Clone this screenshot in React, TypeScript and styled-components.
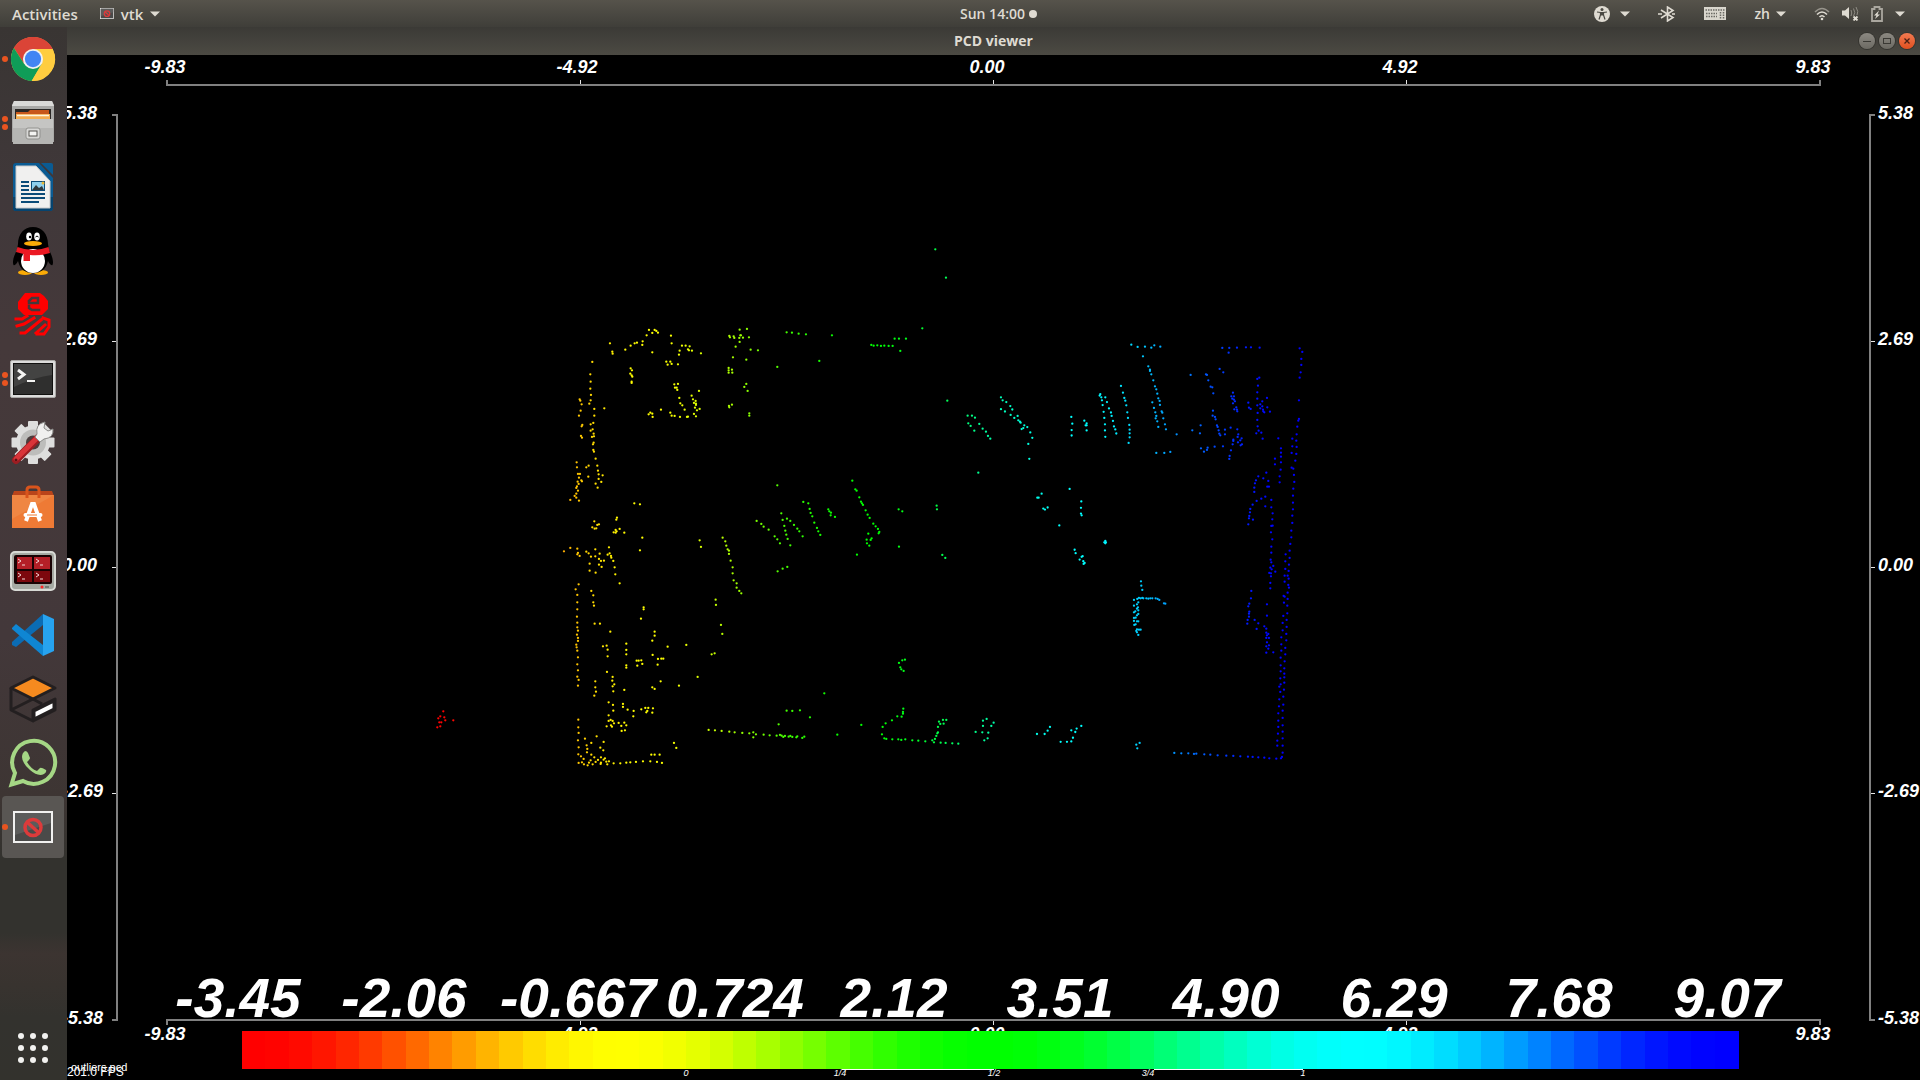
import React from "react";
import styled, { createGlobalStyle } from "styled-components";

const GlobalStyle = createGlobalStyle`
  * { box-sizing: border-box; }
  html, body { margin: 0; background: #000; }
  body { font-family: "Open Sans", "Noto Sans", sans-serif; color: #dfdbd2; overflow: hidden; }
  button { border: 0; padding: 0; margin: 0; background: none; color: inherit; font: inherit; }
`;

const Desktop = styled.div`
  min-height: 100vh;
  display: flex;
  flex-direction: column;
`;

const TopBar = styled.header`
  height: 27px;
  display: grid;
  grid-template-columns: 1fr auto 1fr;
  align-items: center;
  padding: 0 15px 0 12px;
  background: linear-gradient(#56534b, #3f3e39);
  font-size: 14px;
  line-height: 20px;
  font-weight: 600;
`;

const BarGroup = styled.div<{ $gap: number; $end?: boolean }>`
  display: flex;
  align-items: center;
  gap: ${(p) => p.$gap}px;
  justify-content: ${(p) => (p.$end ? "flex-end" : "flex-start")};
`;

const BarButton = styled.button<{ $gap?: number; $large?: boolean }>`
  display: flex;
  align-items: center;
  gap: ${(p) => p.$gap ?? 0}px;
  font-size: ${(p) => (p.$large ? 15 : 14)}px;
  svg { display: block; }
`;

const Clock = styled.button`
  display: flex;
  align-items: center;
  gap: 4px;
  margin-left: 80px;
`;

const ClockDot = styled.span`
  width: 8px;
  height: 8px;
  border-radius: 50%;
  background: #dfdbd2;
`;

const Workspace = styled.div`
  flex: 1;
  display: grid;
  grid-template-columns: 67px 1fr;
`;

const Dock = styled.nav`
  display: flex;
  flex-direction: column;
  background: linear-gradient(
    #393533 0, #40383a 16%, #45393a 30%, #43383a 58%, #3d3533 73%, #33322e 79%,
    #33322e 86%, #3c3431 88%, #38332f 91%, #33322e 94%, #33322d 100%
  );
`;

const DockItem = styled.button<{ $active?: boolean }>`
  position: relative;
  width: 62px;
  height: 62px;
  margin: 1px 0 1px 2px;
  border-radius: 4px;
  display: flex;
  align-items: center;
  justify-content: center;
  background: ${(p) => (p.$active ? "#595653" : "none")};
  svg { display: block; overflow: visible; }
`;

const AppsButton = styled(DockItem)`
  margin-top: auto;
`;

const Running = styled.span`
  position: absolute;
  left: 0;
  top: 0;
  height: 100%;
  display: flex;
  flex-direction: column;
  justify-content: center;
  gap: 2px;
`;

const RunningDot = styled.i`
  width: 6px;
  height: 6px;
  border-radius: 50%;
  background: #e95420;
`;

const Window = styled.main`
  min-width: 0;
  overflow: hidden;
  background: #000;
`;

const TitleBar = styled.div`
  height: 28px;
  display: grid;
  grid-template-columns: 1fr auto 1fr;
  align-items: center;
  padding: 0 5px;
  background: linear-gradient(#3b3a36, #4c4a43);
`;

const Title = styled.h1`
  grid-column: 2;
  margin: 0;
  font-size: 14px;
  line-height: 20px;
  font-weight: 700;
`;

const WindowButtons = styled.div`
  display: flex;
  justify-content: flex-end;
  gap: 4px;
`;

const WindowButton = styled.button<{ $close?: boolean }>`
  width: 16px;
  height: 16px;
  border-radius: 50%;
  background: ${(p) => (p.$close ? "linear-gradient(#f27a51, #e2501f)" : "linear-gradient(#8c8982, #6c6a63)")};
  box-shadow: 0 0 0 1px #35342f;
  svg { display: block; }
`;

const Scene = styled.svg`
  display: block;
  width: 100%;
  height: auto;
`;

const AxisText = styled.text`
  font: italic 700 18px "Liberation Sans", Arial, sans-serif;
  fill: #fff;
`;

const ScaleText = styled.text`
  font: italic 700 55px "Liberation Sans", Arial, sans-serif;
  fill: #fff;
  text-anchor: middle;
`;

const LegendText = styled.text`
  font: italic 400 9px "Liberation Sans", Arial, sans-serif;
  fill: #fff;
  text-anchor: middle;
`;

const OverlayText = styled.text<{ $size: number }>`
  font: 400 ${(p) => p.$size}px "Liberation Sans", Arial, sans-serif;
  fill: #fff;
`;

/* ---------- colour table: hue 0..240 through an S-curve ramp ---------- */

const BANDS = 64;

function rainbow(t: number): string {
  const h = Math.max(0, Math.min(1, t)) * 4;
  const up = (v: number) => Math.round(127.5 * (1 + Math.cos((1 - Math.max(0, Math.min(1, v))) * Math.PI)));
  return `rgb(${up(2 - h)},${up(h < 2 ? h : 4 - h)},${up(h - 2)})`;
}

/* ---------- scanned points, grouped in tiles ---------- */

type Tile = { x: number; y: number; sx: number; sy: number; pts: string };

const TILES: Tile[] = [
  { x: 0, y: 0, sx: 1, sy: 1, pts: "443,711 440,716 444,717 439,722 441,722 437,727 440,726 445,720 453,720 438,718 935,249" },
  {
    x: 540, y: 310, sx: 3, sy: 3,
    pts: "209,99 216,124 217,130 255,118 271,106 283,99 290,97 307,93 306,104 319,75 326,59 336,68 343,59 348,62 353,67 336,126 392,76 394,99 425,106 436,106 448,108 418,121 443,117 446,120 455,121 416,133 482,129 156,155 378,154 390,154 382,163 394,161 413,162 271,174 275,180 270,190 274,195 276,199 274,214 274,218 150,192 151,214 150,235 152,254 151,270 147,280 162,296 192,294 162,316 118,267 120,271 124,282 121,301 116,316 159,338 151,342 126,344 124,348 157,357 151,361 160,370 122,377 125,382 155,380 161,378 160,397 158,402 159,419 161,424 166,445 171,466 145,466 138,471 173,481 175,492 187,495 175,506 183,515 166,520 172,532 144,499 109,456 110,471 113,491 119,491 116,502 123,510 125,513 112,514 115,521 110,528 108,533 113,541 108,550 103,557 108,562 90,569 116,571 402,222 413,221 404,232 409,232 411,239 476,242 417,263 420,279 426,285 433,298 454,256 458,267 466,272 461,278 467,280 467,284 464,292 470,300 478,296 461,311 467,318 362,298 390,307 394,316 403,317 419,320 440,320 443,319 325,312 330,307 336,310 337,320 282,579 299,582 230,622 228,628 238,656 226,659 220,666 229,663 226,667 252,667 306,682 299,720 162,633 176,642 171,644 156,651 163,655 168,654 478,690 482,710 547,682 555,693 558,706 562,717 566,721 566,731 571,751 577,771 598,58 567,77 569,81 580,78 582,83 600,75 597,83 598,95 586,109 578,141 565,173 575,178 565,180 565,187 576,187 566,287 567,291 575,283 71,723 90,713 111,715 113,728 111,732 118,737 138,724 145,729 152,739 165,717 165,738 178,730 176,746 182,752 191,751 148,760 176,763 184,770 206,711 208,729 202,733 212,737 213,742 219,752 223,771",
  },
  {
    x: 540, y: 560, sx: 3, sy: 3,
    pts: "148,31 166,37 225,42 238,69 115,72 106,87 111,104 111,126 111,147 110,169 111,187 111,201 113,211 110,223 113,233 113,242 108,253 109,261 111,271 113,291 111,312 113,330 111,349 115,359 113,376 153,92 159,105 159,126 161,136 163,190 179,190 210,214 188,258 199,256 202,268 202,288 200,335 217,350 216,361 222,372 217,378 219,393 252,389 165,363 165,381 167,394 162,406 205,426 218,434 219,451 205,465 248,431 248,440 262,448 280,452 279,468 303,447 315,443 324,443 338,444 321,452 318,456 336,457 205,482 211,479 217,482 221,489 235,488 252,487 199,498 212,495 215,499 243,497 258,495 244,512 254,510 310,141 310,147 302,175 343,214 343,226 336,241 258,250 258,269 258,282 258,315 258,322 337,284 353,296 363,295 369,295 352,313 289,301 295,301 303,300 291,316 306,311 382,259 438,254 472,350 416,376 361,363 336,381 343,386 526,118 527,134 542,194 546,221 514,282 523,279 577,39 580,60 589,69 589,82 597,92 401,548 408,563 505,509 524,510 544,512 567,514 583,516 114,478 114,501 115,518 113,540 115,561 114,582 169,528 134,535 190,545 153,548 139,555 141,566 180,562 189,570 140,576 153,583 122,588 162,591 182,591 130,596 151,600 173,599 190,598 194,594 115,608 125,606 131,612 142,615 146,607 157,612 166,605 182,607 181,611 198,604 206,603 201,612 220,609 240,609 258,607 270,606 287,605 308,603 330,603 350,605 365,608 333,583 343,583 358,583",
  },
  {
    x: 740, y: 310, sx: 3, sy: 3,
    pts: "20,56 2,75 8,82 26,81 31,118 53,120 18,148 18,221 12,230 22,242 27,309 27,316 139,66 155,67 175,70 197,72 275,75 111,170 237,152 393,104 400,106 411,105 422,107 432,106 445,107 457,107 463,85 476,85 497,85 480,122 546,54 621,271 682,316 695,316 704,322 717,341 684,339 691,347 702,361 727,355 737,364 743,377 750,385 714,487 589,586 590,597 475,597 486,603 476,709 606,734 615,743 336,511 345,537 349,541 357,561 362,574 365,579 368,584 376,600 382,613 388,623 399,640 406,648 413,656 417,665 415,669 384,670 394,684 391,689 379,688 380,699 387,706 350,733 111,525 49,632 63,641 70,649 85,658 103,678 111,687 119,699 123,609 127,629 132,647 135,661 138,673 142,686 150,705 140,625 150,632 161,644 171,655 177,663 187,678 189,575 204,579 208,596 211,608 216,618 222,637 230,653 234,663 240,674 264,597 267,603 272,607 271,615 284,620 112,783 127,775 141,770 3,849 494,1048 486,1050 476,1058 480,1071 483,1077 490,1082 252,1149 139,1201 156,1202 179,1200 209,1221 115,1242 6,1268 27,1269 39,1266 47,1272 39,1281 70,1273 88,1275 109,1276 119,1274 124,1276 129,1280 134,1277 145,1279 150,1277 156,1280 168,1281 171,1278 186,1283 192,1279 291,1273 363,1244 489,1195 488,1205 488,1210 484,1219 471,1218 455,1230 436,1239 427,1250 425,1272 432,1284 438,1286 456,1287 474,1287 483,1289 495,1287 516,1290 534,1291 555,1293 576,1290 581,1296 601,1297 616,1298 636,1299 654,1300 584,1286 588,1277 591,1269 593,1266 593,1250 596,1234 600,1241 610,1240 608,1229 618,1229 739,1226 728,1231 760,1237 728,1247 753,1247 706,1265 726,1266 744,1267 742,1284 732,1290",
  },
  {
    x: 940, y: 230, sx: 3, sy: 2.958,
    pts: "17,140 182,494 187,503 198,508 210,520 182,529 194,536 216,530 211,546 222,555 232,549 234,562 239,566 241,569 252,577 249,585 244,588 261,582 270,598 276,614 264,632 267,676 393,552 396,572 394,591 394,607 432,563 439,571 436,577 439,577 439,592 480,485 478,489 483,494 495,494 485,503 500,508 487,517 506,527 490,537 512,539 514,549 492,555 518,564 494,574 521,580 494,592 525,589 528,601 495,611 388,765 304,779 291,791 295,791 309,823 314,826 322,820 423,802 422,821 422,838 424,843 357,873 495,919 492,923 497,923 495,926 403,945 406,955 427,964 424,966 418,974 429,979 433,984 430,987 329,1469 322,1480 313,1490 290,1490 423,1466 409,1474 393,1479 405,1484 398,1501 393,1512 380,1513 361,1513",
  },
  {
    x: 1120, y: 330, sx: 3, sy: 3,
    pts: "33,43 52,50 74,49 93,52 102,45 120,49 68,78 84,108 89,118 89,122 93,132 99,150 104,168 108,177 111,190 114,204 118,212 119,224 96,216 101,233 105,246 108,257 106,264 111,273 124,243 126,247 129,264 114,290 134,282 137,297 2,167 8,187 12,203 15,211 18,225 21,246 23,263 27,284 28,298 28,309 28,321 25,338 108,368 132,368 150,365 169,312 211,134 216,300 241,285 239,309 242,354 251,364 260,359 262,352 283,349 308,348 306,53 327,53 325,67 350,52 377,51 392,51 418,52 298,116 309,126 257,132 260,134 264,150 271,169 276,171 279,189 278,241 277,256 284,260 286,267 290,285 292,290 295,300 297,310 300,315 314,298 314,312 331,292 351,297 338,187 333,198 341,198 336,205 341,208 344,213 338,219 348,231 342,237 350,238 351,243 354,312 352,320 339,328 339,332 360,330 353,336 364,324 337,342 365,342 361,345 332,360 328,377 327,386 384,217 386,232 391,236 417,142 411,146 413,166 411,186 411,205 411,225 412,248 411,269 412,288 415,301 408,309 423,307 427,325 440,203 426,213 420,222 426,228 420,234 428,238 429,243 441,231 449,244 432,246 474,324 538,54 546,65 543,86 543,104 541,126 538,142 536,210 536,266 534,271 531,289 529,312 528,331 529,350 528,371 525,391 519,415 514,412 521,434 522,455 519,475 518,496 518,517 518,537 516,556 516,578 513,601 513,621 510,641 508,661 508,683 506,703 505,722 502,736 505,745 504,764 506,772 502,787 502,806 501,826 501,849 499,869 499,890 498,911 498,930 495,953 495,972 493,993 492,1014 492,1030 492,1041 492,1057 491,1078 489,1099 489,1123 487,1141 487,1163 487,1185 487,1204 487,1224 487,1246 487,1267 485,1280 482,1284 468,1285 447,1284 432,1282 414,1281 397,1280 383,1279 360,1278 339,1277 318,1276 292,1275 270,1273 252,1272 228,1270 221,1271 204,1269 183,1269 162,1268 516,325 516,348 514,368 482,354 482,367 482,379 482,396 481,418 478,438 478,456 464,385 464,402 438,427 429,444 444,452 441,469 446,469 414,438 407,450 404,459 402,472 402,485 435,499 423,505 409,512 397,523 390,536 389,546 387,557 386,564 398,568 384,582 453,509 435,528 453,531 457,549 456,567 453,587 457,586 452,606 456,627 453,649 453,667 451,688 453,696 459,707 450,712 454,717 447,728 452,729 465,724 452,738 450,758 450,774 496,672 495,693 495,716 493,736 493,754 490,797 493,799 491,817 489,857 487,878 487,900 483,921 483,942 483,961 481,982 481,1005 481,1023 480,1044 481,1062 477,1069 480,1085 477,1107 476,1128 474,1149 474,1171 474,1190 473,1210 471,1231 471,1246 393,782 392,804 387,820 384,828 387,844 386,850 386,859 382,869 381,880 403,869 414,879 409,896 432,888 440,822 440,856 438,895 438,907 444,911 440,915 438,923 446,923 440,936 446,945 438,948 444,955 438,967 459,966 62,753 63,766 66,779 41,809 51,806 56,803 61,804 66,803 69,804 78,804 84,805 90,804 96,804 106,804 112,806 117,809 131,819 135,820 54,816 50,822 41,826 53,831 50,835 54,840 45,843 41,846 54,851 50,855 46,862 41,863 41,872 50,873 54,873 46,882 42,884 50,897 56,898 61,898 48,902 50,906 54,914 58,1238 48,1243 51,1254",
  },
];

const POINTS = TILES.flatMap((t) =>
  t.pts.split(" ").map((p) => {
    const [x, y] = p.split(",").map(Number);
    return { x: t.x + x / t.sx, y: t.y + y / t.sy };
  })
);

const CLOUD_MIN = 430;
const CLOUD_MAX = 1292;

const H_TICKS = [
  { x: 167, label: "-9.83", at: 165 },
  { x: 580, label: "-4.92", at: 577 },
  { x: 993, label: "0.00", at: 987 },
  { x: 1406, label: "4.92", at: 1400 },
  { x: 1820, label: "9.83", at: 1813 },
];
const V_TICKS = [
  { y: 115, label: "5.38" },
  { y: 341, label: "2.69" },
  { y: 567, label: "0.00" },
  { y: 793, label: "-2.69" },
  { y: 1020, label: "-5.38" },
];
const SCALE = [
  { x: 238, label: "-3.45" },
  { x: 404, label: "-2.06" },
  { x: 578, label: "-0.667" },
  { x: 735, label: "0.724" },
  { x: 894, label: "2.12" },
  { x: 1060, label: "3.51" },
  { x: 1226, label: "4.90" },
  { x: 1394, label: "6.29" },
  { x: 1559, label: "7.68" },
  { x: 1727, label: "9.07" },
];
const LEGEND = [
  { x: 686, label: "0" },
  { x: 840, label: "1/4" },
  { x: 994, label: "1/2" },
  { x: 1148, label: "3/4" },
  { x: 1303, label: "1" },
];

const BAR = { x: 242, y: 1031, w: 1496, h: 38 };

function PointCloud() {
  return (
    <Scene viewBox="67 55 1853 1025" role="img" aria-label="Point cloud">
      {POINTS.map((p, i) => (
        <circle key={i} cx={p.x + 0.3} cy={p.y + 0.3} r="1.15" fill={rainbow((p.x - CLOUD_MIN) / (CLOUD_MAX - CLOUD_MIN))} />
      ))}
      <g stroke="#808080" strokeWidth="2" fill="none">
        <path d="M167 80V85H1820V80" />
        <path d="M167 1025V1020H1820V1025" />
        <path d="M112 115H117V1020H112" />
        <path d="M1875 115H1870V1020H1875" />
      </g>
      <g stroke="#e6e6e6" strokeWidth="1">
        {H_TICKS.slice(1, 4).map((t) => (
          <path key={t.x} d={`M${t.x + 0.5} 80V84M${t.x + 0.5} 1021V1025`} />
        ))}
        {V_TICKS.slice(1, 4).map((t) => (
          <path key={t.y} d={`M112 ${t.y + 0.5}H116M1871 ${t.y + 0.5}H1875`} />
        ))}
      </g>
      {H_TICKS.map((t) => (
        <g key={t.label} textAnchor="middle">
          <AxisText x={t.at} y={73}>{t.label}</AxisText>
          <AxisText x={t.at} y={1040}>{t.label}</AxisText>
        </g>
      ))}
      {V_TICKS.map((t) => (
        <g key={t.label}>
          <AxisText x={62} y={t.y + 4}>{t.label}</AxisText>
          <AxisText x={1878} y={t.y + 4}>{t.label}</AxisText>
        </g>
      ))}
      {SCALE.map((s) => (
        <ScaleText key={s.label} x={s.x} y={1017}>{s.label}</ScaleText>
      ))}
      <g shapeRendering="crispEdges">
        {Array.from({ length: BANDS }, (_, i) => (
          <rect key={i} x={BAR.x + (BAR.w / BANDS) * i} y={BAR.y} width={BAR.w / BANDS + 0.5} height={BAR.h} fill={rainbow(i / (BANDS - 1))} />
        ))}
        <path d="M842 1069.5H994M1154 1069.5H1303" stroke="#fff" />
      </g>
      {LEGEND.map((l) => (
        <LegendText key={l.label} x={l.x} y={1076}>{l.label}</LegendText>
      ))}
      <OverlayText $size={12} x={67} y={1076}>201.0 FPS</OverlayText>
      <OverlayText $size={11} x={71} y={1071}>outliers.pcd</OverlayText>
    </Scene>
  );
}

/* ---------- dock icons ---------- */

const Chrome = () => (
  <svg width="46" height="46" viewBox="0 0 48 48">
    <circle cx="24" cy="24" r="23" fill="#ffcd40" />
    <path d="M4.1 12.5A23 23 0 0 1 43.9 12.5L24 24Z" fill="#db4437" />
    <path d="M24 13.5H44.4A23 23 0 0 0 4.1 12.5L14.9 29.2Z" fill="#db4437" />
    <path d="M4.1 12.5L14.9 29.2L33 29.2L22.6 47A23 23 0 0 1 4.1 12.5Z" fill="#0f9d58" />
    <path d="M24 13.5H44.4A23 23 0 0 1 22.6 47L33.1 29.2Z" fill="#ffcd40" />
    <circle cx="24" cy="24" r="10.5" fill="#f1f1f1" />
    <circle cx="24" cy="24" r="8.5" fill="#4285f4" />
  </svg>
);

const Files = () => (
  <svg width="44" height="46" viewBox="0 0 44 46">
    <path d="M3 1H41L43 5V42H1V5Z" fill="#a9a9a7" />
    <path d="M3 1H41L43 6H1Z" fill="#dadad8" />
    <rect x="4" y="9" width="36" height="12" fill="#2a2725" />
    <path d="M5 12H17L19 10H38V20H5Z" fill="#c8571b" />
    <path d="M5 14H39V21H5Z" fill="#f4ad52" />
    <path d="M6 15.500H38" stroke="#fff4df" strokeWidth="1.500" />
    <path d="M2 19H42V44H2Z" fill="#b5b5b3" />
    <path d="M2 19H42V28H2Z" fill="#c5c5c3" />
    <rect x="15" y="28" width="14" height="11" rx="2" fill="#d8d8d6" stroke="#92928f" />
    <rect x="18" y="31" width="8" height="5" fill="#f4f4f2" stroke="#55534f" />
  </svg>
);

const Writer = () => (
  <svg width="40" height="48" viewBox="0 0 40 48">
    <path d="M3 0H26L40 15V45Q40 48 37 48H3Q0 48 0 45V3Q0 0 3 0Z" fill="#0a5b93" />
    <path d="M0 34H40V45Q40 48 37 48H3Q0 48 0 45Z" fill="#06446f" />
    <path d="M28 0H38Q40 0 40 2V12Z" fill="#0a5b93" />
    <path d="M3 3H23L37 18V45H3Z" fill="#f0f0ef" stroke="#c9c9c9" />
    <path d="M8 19H16M8 23H16M8 27H16M8 31H32M8 35H32M8 39H26" stroke="#0a4b78" strokeWidth="2" />
    <rect x="18.500" y="18.500" width="13" height="9" fill="#8ed0ee" stroke="#0a4b78" />
    <path d="M19 27L23 22L26 25L29 23L31 27Z" fill="#30383c" />
    <circle cx="30" cy="20" r="1.500" fill="#e8b837" />
  </svg>
);

const Penguin = () => (
  <svg width="40" height="48" viewBox="0 0 40 48">
    <ellipse cx="12" cy="45.500" rx="7" ry="2.500" fill="#faab07" />
    <ellipse cx="28" cy="45.500" rx="7" ry="2.500" fill="#faab07" />
    <path d="M20 0C29 0 35 7 35 17L36 23C39 28 41 35 39.500 38C38 39 36 36 35 34C33 43 27 46 20 46C13 46 7 43 5 34C4 36 2 39 .5 38C-1 35 1 28 4 23L5 17C5 7 11 0 20 0Z" fill="#000" />
    <ellipse cx="20" cy="34" rx="12" ry="12" fill="#fff" />
    <ellipse cx="16" cy="9.500" rx="2.800" ry="4" fill="#fff" />
    <ellipse cx="24" cy="9.500" rx="2.800" ry="4" fill="#fff" />
    <circle cx="17" cy="10" r="1.200" />
    <path d="M22.500 10Q24 8 25.500 10" stroke="#000" fill="none" />
    <ellipse cx="20" cy="16.500" rx="9" ry="2.500" fill="#faab07" />
    <path d="M4.500 20Q20 26 35.500 20L37 26Q28 29 17 28V34H10.500V27L3 25Z" fill="#eb1923" />
  </svg>
);

const Yi = () => (
  <svg width="38" height="44" viewBox="0 0 38 44" fill="none" stroke="#f00" strokeLinecap="square">
    <path d="M11 0H26L30 3L34 8V16L28 22H10L4 16V9Z" fill="#f00" stroke="none" />
    <path d="M15 8L18 5H24V10H15M15 13V15L18 17H25" stroke="#43383a" strokeWidth="2.500" />
    <path d="M2 26H8L13 23M3 33L10 31L20 25M7 40H11L27 27M22 40L31 32M29 25L35 27V34L30 41H23" strokeWidth="3" />
  </svg>
);

const Terminal = () => (
  <svg width="46" height="38" viewBox="0 0 46 38">
    <rect x=".5" y=".5" width="45" height="37" rx="1.500" fill="#dcdcdb" stroke="#aaa9a6" />
    <rect x="3.500" y="3.500" width="39" height="31" fill="#2f2f2e" stroke="#11110f" />
    <path d="M4 4H42V15Q25 17 4 27Z" fill="#434342" />
    <path d="M8 10L14 14.500L8 19" stroke="#f4f4f2" strokeWidth="3" fill="none" />
    <path d="M17 21H25" stroke="#f4f4f2" strokeWidth="2" />
  </svg>
);

const Tweaks = () => (
  <svg width="44" height="46" viewBox="0 0 44 46">
    <g fill="#dededd">
      {[0, 45, 90, 135].map((a) => (
        <rect key={a} x="17" y="1" width="10" height="43" rx="1" transform={`rotate(${a} 22 22.500)`} />
      ))}
      <circle cx="22" cy="22.500" r="17" />
    </g>
    <circle cx="22" cy="22.500" r="13" fill="#bdbdbb" />
    <circle cx="22" cy="22.500" r="7" fill="#4a3d3d" />
    <path d="M5 40L27 18" stroke="#9b1d22" strokeWidth="8" strokeLinecap="round" />
    <path d="M5 39L27 17" stroke="#d93439" strokeWidth="5" strokeLinecap="round" />
    <circle cx="5" cy="40" r="1.500" fill="#5e1013" />
    <path d="M26 14Q24 4 34 2L33 8L37 11L42 9Q43 18 33 19L29 22L24 17Z" fill="#f0f0ef" stroke="#8b8b89" />
  </svg>
);

const Software = () => (
  <svg width="42" height="44" viewBox="0 0 42 44">
    <path d="M2 6H40L42 11H0Z" fill="#b9441a" />
    <path d="M0 10H42V43H0Z" fill="#ee7a35" />
    <path d="M0 10H42L0 34Z" fill="#ef9152" opacity=".5" />
    <path d="M15 13V5Q15 2 18 2H24Q27 2 27 5V13" fill="none" stroke="#d9541c" strokeWidth="3" />
    <path d="M14 36L20 19H22L28 36" fill="none" stroke="#fff" strokeWidth="4" />
    <path d="M13.500 30H28.500" stroke="#fff" strokeWidth="4" strokeLinecap="round" />
    <path d="M15 30H25" stroke="#ee7a35" strokeWidth="1" />
  </svg>
);

const Terminator = () => (
  <svg width="46" height="40" viewBox="0 0 46 40">
    <rect x="1" y="1" width="44" height="38" rx="4" fill="#a6aaa3" stroke="#d8dad5" strokeWidth="2" />
    <rect x="4" y="4" width="38" height="29" rx="2" fill="#190304" />
    <path d="M7 6H22V18H7ZM24 6H40V18H24Z" fill="#b41f27" />
    <path d="M7 20H22V31H7ZM24 20H40V31H24Z" fill="#7c080d" />
    <path d="M8 8L11 10L8 12M26 8L29 10L26 12M8 22L11 24L8 26M26 22L29 24L26 26M12 14H15M30 14H33M12 28H15M30 28H33" stroke="#f3d8d8" fill="none" />
    <circle cx="32" cy="36" r="1.500" fill="#f22" />
    <path d="M35 36H39" stroke="#747871" strokeWidth="2" />
  </svg>
);

const Code = () => (
  <svg width="42" height="42" viewBox="0 0 42 42">
    <path d="M0 28V31L4 33L31 11V0Z" fill="#0b6cb4" />
    <path d="M0 14L4 10L31 31V42L0 15Z" fill="#0f86d3" />
    <path d="M31 0L42 5V37L31 42Z" fill="#27a3ef" />
  </svg>
);

const Box = () => (
  <svg width="48" height="48" viewBox="0 0 48 48" fill="none" stroke="#231f20" strokeWidth="3" strokeLinejoin="round">
    <path d="M24 2L46 13L24 24L2 13Z" fill="#f58a1f" />
    <path d="M2 13V35L24 46V35L46 24V35L24 46M2 35L24 24L33 29" />
    <path d="M25 36L45 26V34L25 44Z" fill="#fff" />
  </svg>
);

const WhatsApp = () => (
  <svg width="48" height="48" viewBox="0 0 48 48">
    <path d="M2.500 45.500L6 34A21.500 21.500 0 1 1 14 42Z" fill="none" stroke="#a5d785" strokeWidth="4" />
    <path d="M16 12Q18 12 19 14L21 19Q21 20 18 23Q22 30 28 32L31 29Q32 28 37 31Q38 33 35 35Q29 38 21 31Q13 24 13 18Q13 14 16 12Z" fill="#a5d785" />
  </svg>
);

const Blocked = ({ w = 40, h = 32 }: { w?: number; h?: number }) => (
  <svg width={w} height={h} viewBox="0 0 40 32">
    <rect x="1" y="1" width="38" height="30" fill="#4a4a49" stroke="#f1f1f0" strokeWidth="2" />
    <path d="M2 2H38V12L2 24Z" fill="#5c5c5b" />
    <circle cx="20" cy="16.500" r="8" fill="none" stroke="#dc3b3b" strokeWidth="3.500" />
    <path d="M14 11L26 22" stroke="#dc3b3b" strokeWidth="3.500" />
  </svg>
);

const AppsGrid = () => (
  <svg width="32" height="32" viewBox="0 0 32 32" fill="#f2f2f0">
    {[4, 16, 28].flatMap((y) => [4, 16, 28].map((x) => <circle key={`${x}-${y}`} cx={x} cy={y} r="3" />))}
  </svg>
);

const Caret = () => (
  <svg width="10" height="6" viewBox="0 0 10 6"><path d="M0 .5H10L5 5.500Z" fill="#dfdbd2" /></svg>
);

const DOCK = [
  { name: "Google Chrome", icon: <Chrome />, windows: 1 },
  { name: "Files", icon: <Files />, windows: 2 },
  { name: "LibreOffice Writer", icon: <Writer />, windows: 0 },
  { name: "QQ", icon: <Penguin />, windows: 0 },
  { name: "Yi", icon: <Yi />, windows: 0 },
  { name: "Terminal", icon: <Terminal />, windows: 2 },
  { name: "Tweaks", icon: <Tweaks />, windows: 0 },
  { name: "Ubuntu Software", icon: <Software />, windows: 0 },
  { name: "Terminator", icon: <Terminator />, windows: 0 },
  { name: "Visual Studio Code", icon: <Code />, windows: 0 },
  { name: "Box", icon: <Box />, windows: 0 },
  { name: "WhatsApp", icon: <WhatsApp />, windows: 0 },
  { name: "vtk", icon: <Blocked />, windows: 1, active: true },
];

export default function App() {
  return (
    <Desktop>
      <GlobalStyle />
      <TopBar>
        <BarGroup $gap={22}>
          <BarButton $large>Activities</BarButton>
          <BarButton $gap={7} $large>
            <Blocked w={14} h={11} />
            <span>vtk</span>
            <Caret />
          </BarButton>
        </BarGroup>
        <Clock>
          Sun 14:00
          <ClockDot />
        </Clock>
        <BarGroup $gap={28} $end>
          <BarButton $gap={10} aria-label="Accessibility">
            <svg width="16" height="16" viewBox="0 0 16 16">
              <circle cx="8" cy="8" r="8" fill="#dfdbd2" />
              <circle cx="8" cy="3.500" r="1.500" fill="#4a4943" />
              <path d="M3 6L6.500 6.500H9.500L13 6M6.500 6.500V9L5 13.500M9.500 6.500V9L11 13.500" stroke="#4a4943" strokeWidth="1.200" fill="none" />
              <path d="M6.500 6.500H9.500V9.500H6.500Z" fill="#4a4943" />
            </svg>
            <Caret />
          </BarButton>
          <BarButton aria-label="Bluetooth">
            <svg width="18" height="16" viewBox="0 0 18 16" fill="none" stroke="#dfdbd2" strokeWidth="1.600">
              <path d="M3 4L15 11.500L9.500 15V1L15 4.500L3 12M0 8H4M14 8H17" />
            </svg>
          </BarButton>
          <BarButton aria-label="Keyboard">
            <svg width="22" height="13" viewBox="0 0 22 13">
              <rect width="22" height="13" fill="#d9d6cd" />
              <path d="M1.500 3H20.500M2 6.500H13M2 9.500H13M16.500 5V12M19.500 5V12" stroke="#6b6a64" strokeWidth="1.500" strokeDasharray="1.500 1" />
            </svg>
          </BarButton>
          <BarButton $gap={6}>
            <span>zh</span>
            <Caret />
          </BarButton>
          <BarButton $gap={12} aria-label="System">
            <svg width="16" height="14" viewBox="0 0 16 14" fill="none" stroke="#dfdbd2" strokeWidth="1.600">
              <path d="M1 5Q8 -2 15 5" opacity=".5" />
              <path d="M3 7.500Q8 2.500 13 7.500M5.500 10Q8 7.500 10.500 10" />
              <circle cx="8" cy="12" r="1.300" fill="#dfdbd2" stroke="none" />
            </svg>
            <svg width="17" height="15" viewBox="0 0 17 15">
              <path d="M0 4.500H3L7 1V13L3 9.500H0Z" fill="#dfdbd2" />
              <path d="M9 4Q10.500 7 9 10M11.500 2.500Q14 7 11.500 10M14 1Q17 6 15 9" stroke="#8f8c84" fill="none" />
              <path d="M11.500 10.500L15.500 14.500M15.500 10.500L11.500 14.500" stroke="#dfdbd2" strokeWidth="1.800" />
            </svg>
            <svg width="12" height="16" viewBox="0 0 12 16">
              <path d="M1 3H3.500V1H8.500V3H11V15H1Z" fill="none" stroke="#aaa79f" strokeWidth="1.800" />
              <path d="M8 4.500L3 9.500H5.500L4 13L9 8.500H6.500Z" fill="#dfdbd2" />
            </svg>
            <Caret />
          </BarButton>
        </BarGroup>
      </TopBar>
      <Workspace>
        <Dock>
          {DOCK.map((d) => (
            <DockItem key={d.name} aria-label={d.name} $active={d.active}>
              {d.windows > 0 && (
                <Running>
                  {Array.from({ length: d.windows }, (_, i) => <RunningDot key={i} />)}
                </Running>
              )}
              {d.icon}
            </DockItem>
          ))}
          <AppsButton aria-label="Show applications"><AppsGrid /></AppsButton>
        </Dock>
        <Window>
          <TitleBar>
            <Title>PCD viewer</Title>
            <WindowButtons>
              <WindowButton aria-label="Minimize">
                <svg width="16" height="16" viewBox="0 0 16 16"><path d="M4 8.500H12" stroke="#3a3934" /></svg>
              </WindowButton>
              <WindowButton aria-label="Maximize">
                <svg width="16" height="16" viewBox="0 0 16 16"><rect x="4.500" y="5.500" width="7" height="5" fill="none" stroke="#3a3934" /></svg>
              </WindowButton>
              <WindowButton $close aria-label="Close">
                <svg width="16" height="16" viewBox="0 0 16 16"><path d="M5.500 5.500L10.500 10.500M10.500 5.500L5.500 10.500" stroke="#4a2014" strokeWidth="1.300" /></svg>
              </WindowButton>
            </WindowButtons>
          </TitleBar>
          <PointCloud />
        </Window>
      </Workspace>
    </Desktop>
  );
}
